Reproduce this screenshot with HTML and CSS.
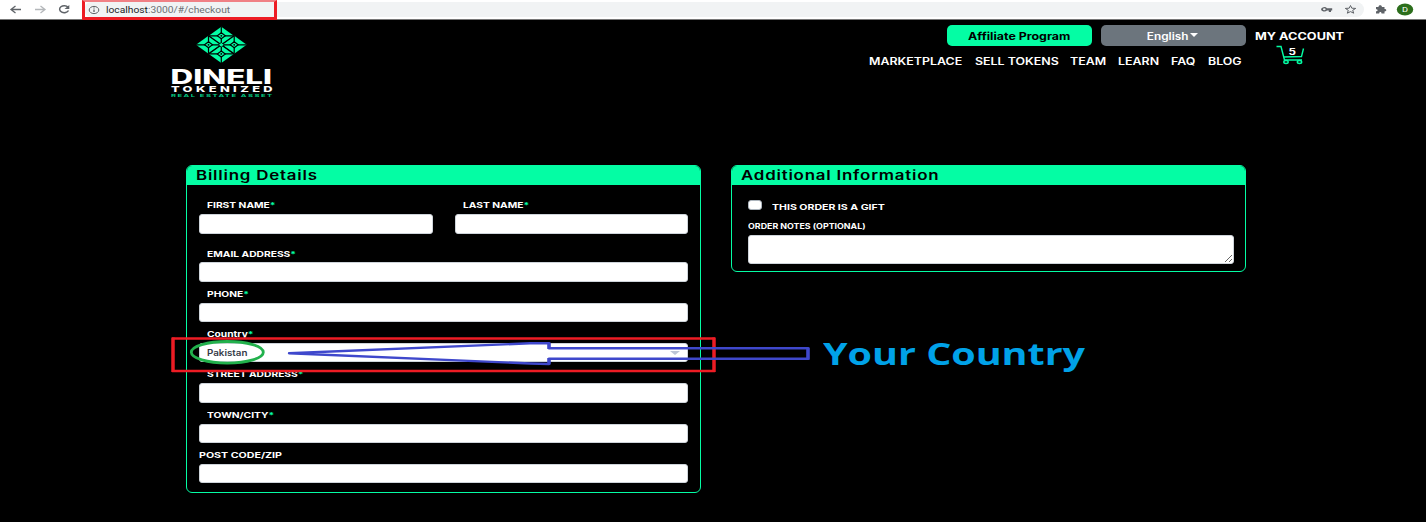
FILE: index.html
```html
<!DOCTYPE html>
<html lang="en">
<head>
<meta charset="utf-8">
<title>Checkout</title>
<link rel="stylesheet" href="styles.css">
</head>
<body>
<div class="browser">
  <svg class="nav-icons" width="84" height="19" viewBox="0 0 84 19" fill="none" stroke="#5f6368" stroke-width="1.3">
    <path d="M21 9.5H11M15.500 6L11 9.500L15.500 13"/>
    <path stroke="#b4b7ba" d="M35 9.500H45M40.500 6L45 9.500L40.500 13"/>
    <path stroke-width="1.500" d="M68 7.200A4.600 3.500 0 1 0 68.500 10.500"/>
    <path fill="#5f6368" stroke="none" d="M69.300 5V9H64.500Z"/>
  </svg>
  <div class="address">
    <svg class="info" width="12" height="10" viewBox="0 0 12 10" fill="none" stroke="#5f6368"><ellipse cx="6" cy="5" rx="4.800" ry="3.600"/><path stroke-width="1.300" d="M6 4.500V7M6 2.600V3.600"/></svg>
    <span class="url"><b>localhost</b>:3000/#/checkout</span>
  </div>
  <svg class="tools" width="116" height="19" viewBox="1310 0 116 19">
    <path fill="#5f6368" fill-rule="evenodd" d="M1321 9.300a3.300 2.500 0 0 1 6-1.100h5.200v2.200h-1.200v1.500h-2.200v-1.500h-1.800a3.300 2.500 0 0 1-6-1.100ZM1323 9.300a1.300 1 0 1 0 2.600 0a1.300 1 0 1 0-2.600 0Z"/>
    <path fill="none" stroke="#5f6368" d="M1350.500 5.500l1.300 2.700 3.900.2-3 1.900 1 2.900-3.200-1.600-3.200 1.600 1-2.900-3-1.900 3.900-.2Z"/>
    <path fill="#5f6368" d="M1376 7h2.500c-.3-2.500 3.700-2.500 3.400 0h2.600v2c2.400-.2 2.400 2.500 0 2.400v2h-3c.2-2-2.400-2-2.300 0H1376v-2.200c2.200 0 2.200-2 0-2Z"/>
    <ellipse cx="1405" cy="9.500" rx="8.200" ry="6" fill="#2c6e1c"/>
    <text x="1402" y="12" textLength="6" lengthAdjust="spacingAndGlyphs" class="avatar">D</text>
  </svg>
  <div class="mark mark-url"></div>
</div>

<header class="header">
  <svg class="logo" width="104" height="76" viewBox="169 24 104 76">
    <defs>
      <g id="gem">
        <path fill="#04fda4" d="M0-9L12.500 0L0 9L-12.500 0Z"/>
        <path stroke="#000" stroke-width="1.200" d="M0-9V9M-12.500 0H12.500"/>
        <path fill="#04fda4" stroke="#000" stroke-width="1.200" d="M0-3L4 0L0 3L-4 0Z"/>
        <circle r=".9"/>
      </g>
    </defs>
    <use href="#gem" x="221.300" y="35.800"/><use href="#gem" x="208.500" y="44.800"/>
    <use href="#gem" x="234.200" y="44.800"/><use href="#gem" x="221.300" y="53.900"/>
    <path stroke="#000" stroke-width="1.300" d="M208.500 35.800L234.100 53.900M234.100 35.800L208.500 53.900"/>
    <path fill="#04fda4" stroke="#000" stroke-width=".8" d="M221.300 42.500l3 2.300-3 2.300-3-2.300Z"/>
    <text class="logo-name" x="170.500" y="83.500" textLength="101.500" lengthAdjust="spacingAndGlyphs">DINELI</text>
    <text class="logo-sub" transform="translate(171 92.300) scale(1.600 1)" textLength="63.500" lengthAdjust="spacing">TOKENIZED</text>
    <text class="logo-tag" transform="translate(171 96.600) scale(1.900 1)" textLength="53.200" lengthAdjust="spacing">REAL ESTATE ASSET</text>
  </svg>
  <div class="menu">
    <div class="actions">
      <a class="btn affiliate"><span>Affiliate Program</span></a>
      <a class="btn language"><span>English</span><i class="caret"></i></a>
    </div>
    <nav class="links">
      <a class="l1">MARKETPLACE</a><a class="l2">SELL TOKENS</a><a class="l3">TEAM</a><a class="l4">LEARN</a><a class="l5">FAQ</a><a class="l6">BLOG</a>
    </nav>
  </div>
  <div class="account">
    <span class="account-name">MY ACCOUNT</span>
    <svg class="cart" width="29" height="20" viewBox="1276 45 29 20" fill="none" stroke="#04fda4" stroke-width="1.400">
      <path d="M1276.500 46.500H1281L1284.500 60H1302M1283.500 57L1301.500 56.500L1303.500 48.500"/>
      <ellipse cx="1286" cy="62" rx="2.200" ry="1.500"/><ellipse cx="1299.500" cy="62" rx="2.200" ry="1.500"/>
      <text class="count" x="1288.500" y="54.500" textLength="7.500" lengthAdjust="spacingAndGlyphs">5</text>
    </svg>
  </div>
</header>

<main class="content">
  <section class="card">
    <h2><span>Billing Details</span></h2>
    <form class="form">
      <div class="row">
        <div class="field"><label><span>FIRST NAME<em>*</em></span></label><input></div>
        <div class="field"><label><span>LAST NAME<em>*</em></span></label><input></div>
      </div>
      <div class="field"><label><span>EMAIL ADDRESS<em>*</em></span></label><input></div>
      <div class="field"><label><span>PHONE<em>*</em></span></label><input></div>
      <div class="field"><label><span>Country<em>*</em></span></label><div class="select"><span>Pakistan</span><i></i></div></div>
      <div class="field"><label><span>STREET ADDRESS<em>*</em></span></label><input></div>
      <div class="field"><label><span>TOWN/CITY<em>*</em></span></label><input></div>
      <div class="field flush"><label><span>POST CODE/ZIP</span></label><input></div>
    </form>
  </section>
  <section class="card extra">
    <h2><span>Additional Information</span></h2>
    <div class="extra-body">
      <div class="gift"><i class="check"></i><span>THIS ORDER IS A GIFT</span></div>
      <div class="notes-label"><span>ORDER NOTES (OPTIONAL)</span></div>
      <textarea></textarea>
    </div>
  </section>
</main>

<svg class="annotations" width="1426" height="522" viewBox="0 0 1426 522" fill="none">
  <path stroke="#ed1c24" stroke-width="2.400" d="M172 338.500H715M172 371H715"/>
  <path stroke="#ed1c24" stroke-width="3.500" d="M173 337.500V372M714 337.500V372"/>
  <ellipse cx="227.300" cy="352.300" rx="36" ry="10.800" stroke="#22b14c" stroke-width="2.800"/>
  <path stroke="#3f48cc" stroke-width="2.400" stroke-linejoin="round" d="M289 353.300L530 343.300H549V348.300H808V358.700H549V364L530 363.500Z"/>
  <path stroke="#3f48cc" stroke-width="3.500" d="M549 342.500V349M549 358V364.500M808 347.500V359.700"/>
</svg>
<div class="callout">Your Country</div>
</body>
</html>
```
FILE: styles.css
```css
* { box-sizing: border-box; }
body { margin: 0; width: 1426px; height: 522px; overflow: hidden; background: #000; color: #fff; font-family: Inter, "Liberation Sans", sans-serif; }
em, i { font-style: normal; }

.browser { position: relative; display: flex; height: 20px; background: #fff; border-bottom: 1px solid #777; }
.address { flex: 0 0 1280px; height: 15px; margin: 2px 0 0; display: flex; align-items: center; background: #f1f3f4; border-radius: 10px; margin-right: -54px; }
.info { margin-left: 4px; }
.url { margin-left: 6px; font: 9px/15px Roboto, sans-serif; color: #6b6f73; transform: scaleX(1.14); transform-origin: left; white-space: nowrap; padding-top: 1px; }
.url b { font-weight: 400; color: #202124; }
.tools { position: relative; }
.avatar { font: 7px Roboto, sans-serif; fill: #fff; }
.mark { position: absolute; border: 3px solid #ed1c24; }
.mark-url { left: 82px; top: 0; width: 195px; height: 20px; border-top: 2px solid #f08085; }

.header { display: flex; height: 145px; padding-left: 169px; }
.logo { margin-top: 4px; }
.logo-name { font: 800 20px Inter, sans-serif; fill: #fff; }
.logo-sub { font: 800 8px Inter, sans-serif; fill: #fff; }
.logo-tag { font: 700 4px Inter, sans-serif; fill: #04c883; }
.menu { width: 377px; margin: 5px 0 0 596px; }
.actions { display: flex; justify-content: flex-end; gap: 9px; }
.btn { display: flex; align-items: center; justify-content: center; width: 145px; height: 21px; border-radius: 5px; font-size: 10px; font-weight: 600; line-height: 20px; }
.btn span { transform: scaleX(1.24); }
.affiliate { background: #04fda4; color: #000; }
.affiliate span { font-weight: 700; }
.language { background: #6c757d; padding-left: 1px; }
.language span { transform: scaleX(1.18); }
.caret { border: 4.500px solid transparent; border-top: 4px solid #fff; border-bottom: 0; margin: -2px 0 0 5px; }
.links { display: flex; gap: 12px; height: 14px; margin-top: 8px; font-size: 10px; font-weight: 600; line-height: 14px; }
.links a { white-space: nowrap; transform: scaleX(1.24); transform-origin: left; }
.l1 { width: 94px; } .l2 { width: 83px; } .l3 { width: 36px; } .l4 { width: 41px; } .l5 { width: 25px; } .l6 { width: 35px; }
.account { margin: 9px 0 0 9px; display: flex; flex-direction: column; }
.account-name { font-size: 10px; font-weight: 700; line-height: 14px; height: 14px; transform: scaleX(1.27); transform-origin: left; }
.cart { margin: 2px 0 0 21px; }
.count { font: 700 9px Inter, sans-serif; fill: #fff; stroke: none; }

.content { display: flex; align-items: flex-start; gap: 30px; padding-left: 186px; }
.card { width: 515px; height: 327.500px; border: 1.500px solid #04fda4; border-radius: 6px; overflow: hidden; }
.card h2 { margin: 0; height: 19px; padding-left: 8.500px; background: #04fda4; color: #000; font-size: 13px; font-weight: 600; line-height: 18px; letter-spacing: .6px; }
.card h2 span { display: inline-block; transform: scaleX(1.3); transform-origin: left; }
.form { padding: 9.400px 12px 0; }
.row { display: grid; grid-template-columns: 234px 233px; gap: 22px; height: 47.200px; }
label { display: block; height: 20.800px; padding-left: 8px; font-size: 8px; font-weight: 700; line-height: 24.500px; }
.row label { height: 20px; line-height: 22px; }
label span { display: inline-block; transform: scaleX(1.28); transform-origin: left; }
.flush label { padding-left: 0; }
.flush label span { transform: scaleX(1.33); }
label em { color: #04fda4; }
input, .select { display: block; width: 100%; height: 19.500px; padding: 0; border: 1px solid #ced4da; border-radius: 3px; background: #fff; }
.select { display: flex; align-items: center; justify-content: space-between; padding: 0 7px; color: #343a46; font-size: 8.500px; font-weight: 600; line-height: 18px; }
.select span { transform: scaleX(1.15); transform-origin: left; }
.select i { border: 5px solid transparent; border-top: 4px solid #bcc5d6; border-bottom: 0; }
.extra { height: 107px; }
.extra-body { padding: 12px 11px 0 15.500px; }
.gift { display: flex; align-items: center; height: 18px; font-size: 8px; font-weight: 700; }
.check { width: 14px; height: 10px; margin: -2px 10px 0 0; border-radius: 3px; background: #fff; border: 1px solid #adb5bd; }
.gift span { padding-top: 1px; transform: scaleX(1.32); transform-origin: left; }
.notes-label { height: 20px; font-size: 7.500px; font-weight: 700; line-height: 24px; }
.notes-label span { display: inline-block; transform: scaleX(1.18); transform-origin: left; }
textarea { display: block; width: 486px; height: 28.500px; padding: 0; border: 1px solid #ced4da; border-radius: 3px; background: #fff; resize: vertical; }

.annotations { position: absolute; left: 0; top: 0; }
.callout { position: absolute; left: 823px; top: 333px; color: #00a2e8; font: 700 30px/41px "Open Sans", sans-serif; white-space: nowrap; transform: scaleX(1.315); transform-origin: left; }
```
